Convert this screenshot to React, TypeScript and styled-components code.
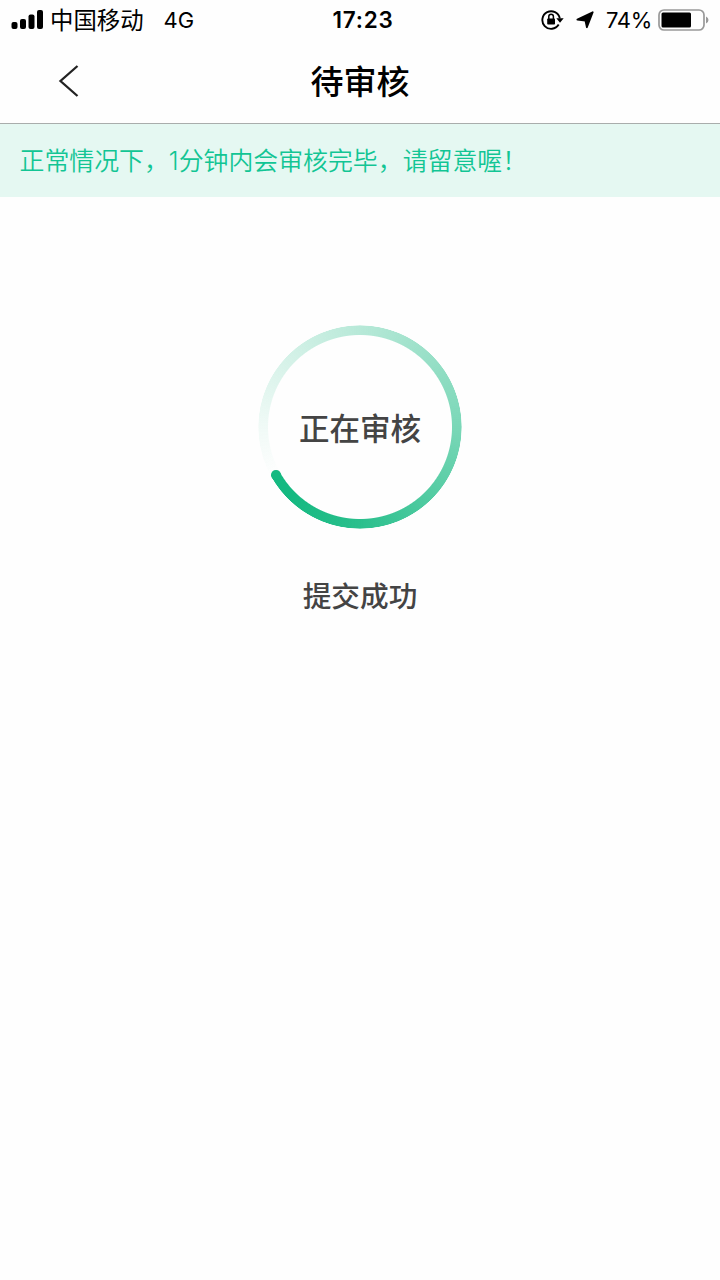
import React from "react";
import styled, { createGlobalStyle } from "styled-components";

function App() {
    return (
        <PageStyle>
            <GlobalStyle />
            <StatusBar>
                <StatusLeft>
                    <svg width="33" height="20" viewBox="0 0 33 20">
                        <rect x="0.5" y="12" width="6" height="7" rx="2" />
                        <rect x="9" y="9" width="6" height="10" rx="2" />
                        <rect x="17.5" y="4.5" width="6" height="14.5" rx="2" />
                        <rect x="26" y="0" width="6" height="19" rx="2" />
                    </svg>
                    <Carrier>中国移动</Carrier>
                    <Network>4G</Network>
                </StatusLeft>
                <Clock>17:23</Clock>
                <StatusRight>
                    <LockIcon />
                    <LocationIcon />
                    <Percent>74%</Percent>
                    <BatteryIcon />
                </StatusRight>
            </StatusBar>

            <Header>
                <BackButton type="button" aria-label="返回">
                    <svg width="22" height="34" viewBox="0 0 22 34" fill="none">
                        <path d="M20.5 2 L3.5 17 L20.5 32" stroke="#222" strokeWidth="2.3" />
                    </svg>
                </BackButton>
                <Title>待审核</Title>
            </Header>

            <Notice>正常情况下，1分钟内会审核完毕，请留意喔！</Notice>

            <Content>
                <Ring>
                    <RingTrack />
                    <RingCap />
                    <RingText>正在审核</RingText>
                </Ring>
                <ResultText>提交成功</ResultText>
            </Content>
        </PageStyle>
    );
}
export default App;

function LockIcon() {
    return (
        <svg width="23" height="22" viewBox="0 0 23 22" fill="none">
            <path d="M17.7 15.6 A8.8 8.8 0 1 1 18.8 9.4" stroke="#000" strokeWidth="1.9" />
            <path d="M15.3 9.2 H22.7 L19 13.8 Z" fill="#000" />
            <rect x="6.2" y="9.4" width="7.8" height="6.2" rx="0.8" fill="#000" />
            <path d="M7.8 10.4 V7.6 A2.3 2.3 0 0 1 12.4 7.6 V10.4" stroke="#000" strokeWidth="1.5" />
        </svg>
    );
}

function LocationIcon() {
    return (
        <LocationSvg width="18" height="18" viewBox="0 0 18 18">
            <path d="M16.7 1.2 L10.9 16.2 L9.4 9.5 L1.4 8.6 Z" stroke="#000" strokeWidth="1.8" strokeLinejoin="round" />
        </LocationSvg>
    );
}

function BatteryIcon() {
    return (
        <svg width="51" height="22" viewBox="0 0 51 22" fill="none">
            <rect x="1" y="1" width="45" height="20" rx="5" stroke="#999" strokeWidth="1.7" />
            <rect x="3.5" y="3.5" width="29.5" height="15" rx="1.5" fill="#000" />
            <path d="M48 7.5 Q50.5 8.5 50.5 11 Q50.5 13.5 48 14.5 Z" fill="#999" />
        </svg>
    );
}

//css
const GlobalStyle = createGlobalStyle`
    body {
        margin: 0;
        background: #fefefe;
    }
`;

const PageStyle = styled.div`
    width: 720px;
    min-height: 1280px;
    background: #fefefe;
    color: #000;
    font-family: Inter, "Noto Sans CJK SC", sans-serif;
`;

const StatusBar = styled.div`
    display: grid;
    grid-template-columns: 1fr auto 1fr;
    align-items: center;
    height: 40px;
    padding: 0 11px;
    box-sizing: border-box;
`;

const StatusLeft = styled.div`
    display: flex;
    align-items: center;
`;

const Carrier = styled.span`
    margin-left: 6px;
    padding-top: 2px;
    font-size: 23.4px;
    line-height: 38px;
`;

const Network = styled.span`
    margin-left: 20px;
    font-size: 22px;
`;

const Clock = styled.div`
    font-size: 22.5px;
    font-weight: 600;
    letter-spacing: 0.8px;
    margin-left: 6px;
    padding-bottom: 1px;
`;

const StatusRight = styled.div`
    display: flex;
    align-items: center;
    justify-content: flex-end;
`;

const LocationSvg = styled.svg`
    margin-left: 12px;
`;

const Percent = styled.span`
    margin: 0 6px 0 12px;
    font-size: 22px;
    letter-spacing: -0.3px;
`;

const Header = styled.header`
    display: grid;
    grid-template-columns: 120px 1fr 120px;
    align-items: center;
    height: 84px;
    padding-bottom: 2px;
    box-sizing: border-box;
    border-bottom: 1px solid #a9adac;
`;

const BackButton = styled.button`
    display: flex;
    padding: 0 0 0 57px;
    border: 0;
    background: none;
`;

const Title = styled.h1`
    margin: 0;
    padding-top: 2px;
    font-size: 33px;
    line-height: 40px;
    font-weight: 500;
    text-align: center;
`;

const Notice = styled.div`
    height: 73px;
    padding: 1px 0 0 19.5px;
    box-sizing: border-box;
    background: #e5f8f2;
    color: #12c594;
    font-size: 24.9px;
    font-weight: 350;
    line-height: 73px;
    white-space: nowrap;
`;

const Content = styled.main`
    display: flex;
    flex-direction: column;
    align-items: center;
    padding-top: 128px;
`;

const Ring = styled.div`
    position: relative;
    display: flex;
    align-items: center;
    justify-content: center;
    width: 204px;
    height: 204px;
`;

const RingTrack = styled.div`
    position: absolute;
    inset: 0;
    border-radius: 50%;
    background: conic-gradient(
        from 240deg,
        rgba(21, 185, 129, 0) 0deg,
        rgba(21, 185, 129, 0.06) 30deg,
        rgba(21, 185, 129, 0.3) 120deg,
        rgba(21, 185, 129, 0.57) 210deg,
        rgba(21, 185, 129, 0.91) 300deg,
        #15b981 345deg
    );
    mask: radial-gradient(circle, transparent 91.5px, #000 92.5px, #000 101.2px, transparent 102px);
`;

// rounded end of the arc
const RingCap = styled.span`
    position: absolute;
    left: 13.2px;
    top: 145.4px;
    width: 9.5px;
    height: 9.5px;
    border-radius: 50%;
    background: #15b981;
`;

const RingText = styled.span`
    padding-top: 3px;
    font-size: 30.5px;
    line-height: 40px;
    font-weight: 500;
    color: #444;
`;

const ResultText = styled.p`
    margin: 48px 0 0;
    font-size: 28.7px;
    line-height: 40px;
    font-weight: 500;
    color: #444;
`;
